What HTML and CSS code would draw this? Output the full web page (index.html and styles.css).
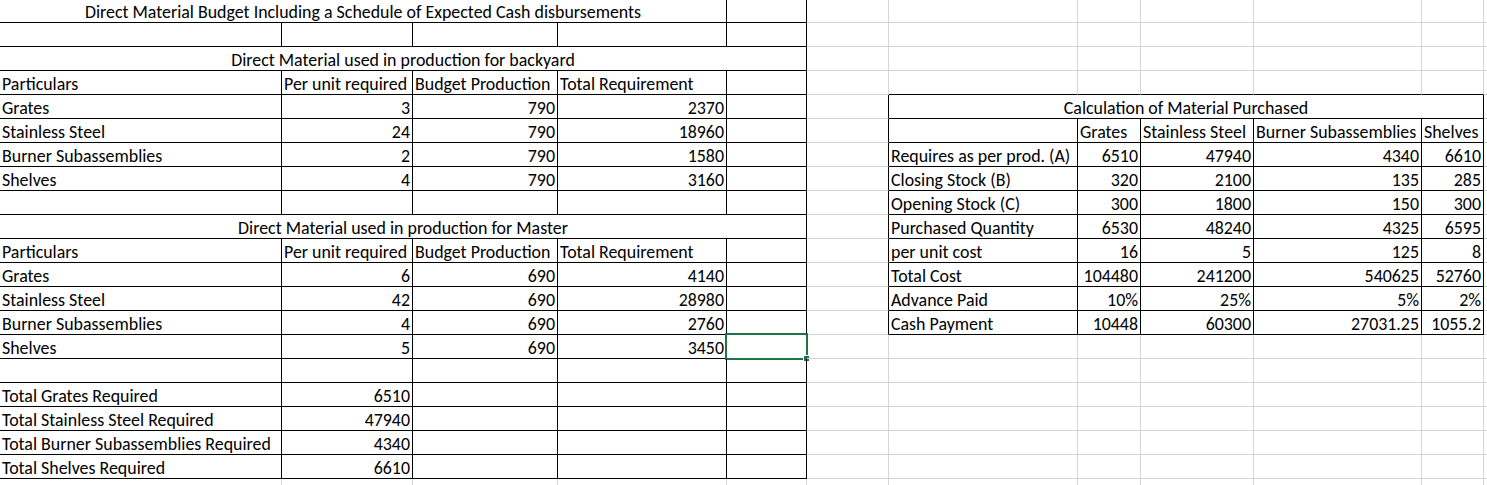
FILE: index.html
```html
<!DOCTYPE html>
<html>
<head>
<meta charset="utf-8">
<title>Direct Material Budget</title>
<link rel="stylesheet" href="styles.css">
</head>
<body>
<div class="sheet">
  <!-- row 0 -->
  <div class="c k m s4">Direct Material Budget Including a Schedule of Expected Cash disbursements</div>
  <div class="c k"></div>
  <div class="c"></div><div class="c"></div><div class="c"></div><div class="c"></div><div class="c"></div><div class="c"></div><div class="c last"></div>
  <!-- row 1 -->
  <div class="c k"></div><div class="c k"></div><div class="c k"></div><div class="c k"></div><div class="c k"></div>
  <div class="c"></div><div class="c"></div><div class="c"></div><div class="c"></div><div class="c"></div><div class="c"></div><div class="c last"></div>
  <!-- row 2 -->
  <div class="c k m s5">Direct Material used in production for backyard</div>
  <div class="c"></div><div class="c"></div><div class="c"></div><div class="c"></div><div class="c"></div><div class="c"></div><div class="c last"></div>
  <!-- row 3 -->
  <div class="c k">Particulars</div><div class="c k">Per unit required</div><div class="c k">Budget Production</div><div class="c k">Total Requirement</div><div class="c k"></div>
  <div class="c"></div><div class="c b"></div><div class="c b"></div><div class="c b"></div><div class="c b"></div><div class="c b"></div><div class="c last"></div>
  <!-- row 4 -->
  <div class="c k">Grates</div><div class="c k n">3</div><div class="c k n">790</div><div class="c k n">2370</div><div class="c k"></div>
  <div class="c r"></div><div class="c k m s5">Calculation of Material Purchased</div><div class="c last"></div>
  <!-- row 5 -->
  <div class="c k">Stainless Steel</div><div class="c k n">24</div><div class="c k n">790</div><div class="c k n">18960</div><div class="c k"></div>
  <div class="c r"></div><div class="c k"></div><div class="c k">Grates</div><div class="c k">Stainless Steel</div><div class="c k">Burner Subassemblies</div><div class="c k">Shelves</div><div class="c last"></div>
  <!-- row 6 -->
  <div class="c k">Burner Subassemblies</div><div class="c k n">2</div><div class="c k n">790</div><div class="c k n">1580</div><div class="c k"></div>
  <div class="c r"></div><div class="c k">Requires as per prod. (A)</div><div class="c k n">6510</div><div class="c k n">47940</div><div class="c k n">4340</div><div class="c k n">6610</div><div class="c last"></div>
  <!-- row 7 -->
  <div class="c k">Shelves</div><div class="c k n">4</div><div class="c k n">790</div><div class="c k n">3160</div><div class="c k"></div>
  <div class="c r"></div><div class="c k">Closing Stock (B)</div><div class="c k n">320</div><div class="c k n">2100</div><div class="c k n">135</div><div class="c k n">285</div><div class="c last"></div>
  <!-- row 8 -->
  <div class="c k"></div><div class="c k"></div><div class="c k"></div><div class="c k"></div><div class="c k"></div>
  <div class="c r"></div><div class="c k">Opening Stock (C)</div><div class="c k n">300</div><div class="c k n">1800</div><div class="c k n">150</div><div class="c k n">300</div><div class="c last"></div>
  <!-- row 9 -->
  <div class="c k m s5">Direct Material used in production for Master</div>
  <div class="c r"></div><div class="c k">Purchased Quantity</div><div class="c k n">6530</div><div class="c k n">48240</div><div class="c k n">4325</div><div class="c k n">6595</div><div class="c last"></div>
  <!-- row 10 -->
  <div class="c k">Particulars</div><div class="c k">Per unit required</div><div class="c k">Budget Production</div><div class="c k">Total Requirement</div><div class="c k"></div>
  <div class="c r"></div><div class="c k">per unit cost</div><div class="c k n">16</div><div class="c k n">5</div><div class="c k n">125</div><div class="c k n">8</div><div class="c last"></div>
  <!-- row 11 -->
  <div class="c k">Grates</div><div class="c k n">6</div><div class="c k n">690</div><div class="c k n">4140</div><div class="c k"></div>
  <div class="c r"></div><div class="c k">Total Cost</div><div class="c k n">104480</div><div class="c k n">241200</div><div class="c k n">540625</div><div class="c k n">52760</div><div class="c last"></div>
  <!-- row 12 -->
  <div class="c k">Stainless Steel</div><div class="c k n">42</div><div class="c k n">690</div><div class="c k n">28980</div><div class="c k"></div>
  <div class="c r"></div><div class="c k">Advance Paid</div><div class="c k n">10%</div><div class="c k n">25%</div><div class="c k n">5%</div><div class="c k n">2%</div><div class="c last"></div>
  <!-- row 13 -->
  <div class="c k">Burner Subassemblies</div><div class="c k n">4</div><div class="c k n">690</div><div class="c k n">2760</div><div class="c k"></div>
  <div class="c r"></div><div class="c k">Cash Payment</div><div class="c k n">10448</div><div class="c k n">60300</div><div class="c k n">27031.25</div><div class="c k n">1055.2</div><div class="c last"></div>
  <!-- row 14 -->
  <div class="c k">Shelves</div><div class="c k n">5</div><div class="c k n">690</div><div class="c k n">3450</div><div class="c k"><div class="sel"></div><div class="handle"></div></div>
  <div class="c"></div><div class="c"></div><div class="c"></div><div class="c"></div><div class="c"></div><div class="c"></div><div class="c last"></div>
  <!-- row 15 -->
  <div class="c k"></div><div class="c k"></div><div class="c k"></div><div class="c k"></div><div class="c k"></div>
  <div class="c"></div><div class="c"></div><div class="c"></div><div class="c"></div><div class="c"></div><div class="c"></div><div class="c last"></div>
  <!-- row 16 -->
  <div class="c k">Total Grates Required</div><div class="c k n">6510</div><div class="c k"></div><div class="c k"></div><div class="c k"></div>
  <div class="c"></div><div class="c"></div><div class="c"></div><div class="c"></div><div class="c"></div><div class="c"></div><div class="c last"></div>
  <!-- row 17 -->
  <div class="c k">Total Stainless Steel Required</div><div class="c k n">47940</div><div class="c k"></div><div class="c k"></div><div class="c k"></div>
  <div class="c"></div><div class="c"></div><div class="c"></div><div class="c"></div><div class="c"></div><div class="c"></div><div class="c last"></div>
  <!-- row 18 -->
  <div class="c k">Total Burner Subassemblies Required</div><div class="c k n">4340</div><div class="c k"></div><div class="c k"></div><div class="c k"></div>
  <div class="c"></div><div class="c"></div><div class="c"></div><div class="c"></div><div class="c"></div><div class="c"></div><div class="c last"></div>
  <!-- row 19 -->
  <div class="c k">Total Shelves Required</div><div class="c k n">6610</div><div class="c k"></div><div class="c k"></div><div class="c k"></div>
  <div class="c"></div><div class="c"></div><div class="c"></div><div class="c"></div><div class="c"></div><div class="c"></div><div class="c last"></div>
  <!-- row 20 -->
  <div class="c"></div><div class="c"></div><div class="c"></div><div class="c"></div><div class="c"></div>
  <div class="c"></div><div class="c"></div><div class="c"></div><div class="c"></div><div class="c"></div><div class="c"></div><div class="c last"></div>
</div>
</body>
</html>
```

FILE: styles.css
```css
html, body {
  margin: 0;
  padding: 0;
  background: #ffffff;
  overflow: hidden;
}

body {
  width: 1487px;
  height: 485px;
  font-family: Carlito, Lato, "Liberation Sans", sans-serif;
  font-size: 17.9px;
  color: #000000;
}

.sheet {
  display: grid;
  grid-template-columns: 282px 131px 145px 169px 80px 82px 189px 63px 113px 168px 62px 3px;
  grid-template-rows: 23px repeat(20, 24px);
  width: 1487px;
  height: 485px;
  overflow: hidden;
}

.c {
  position: relative;
  box-sizing: border-box;
  border-right: 1px solid #d4d4d4;
  border-bottom: 1px solid #d4d4d4;
  display: flex;
  align-items: flex-end;
  justify-content: flex-start;
  padding: 0 2px 0 2px;
  line-height: 20px;
  white-space: nowrap;
}

.last {
  border-right: none;
  padding: 0;
}

.k {
  border-right-color: #000000;
  border-bottom-color: #000000;
}

.r {
  border-right-color: #000000;
}

.b {
  border-bottom-color: #000000;
}

.n {
  justify-content: flex-end;
}

.m {
  justify-content: center;
}

.s4 {
  grid-column: span 4;
}

.s5 {
  grid-column: span 5;
}

.sel {
  position: absolute;
  left: -2px;
  top: -2px;
  width: 83px;
  height: 27px;
  box-sizing: border-box;
  border: 2px solid #217346;
}

.handle {
  position: absolute;
  left: 77px;
  top: 21px;
  width: 5px;
  height: 5px;
  background: #217346;
  box-shadow: 0 0 0 1px #ffffff;
}
```
